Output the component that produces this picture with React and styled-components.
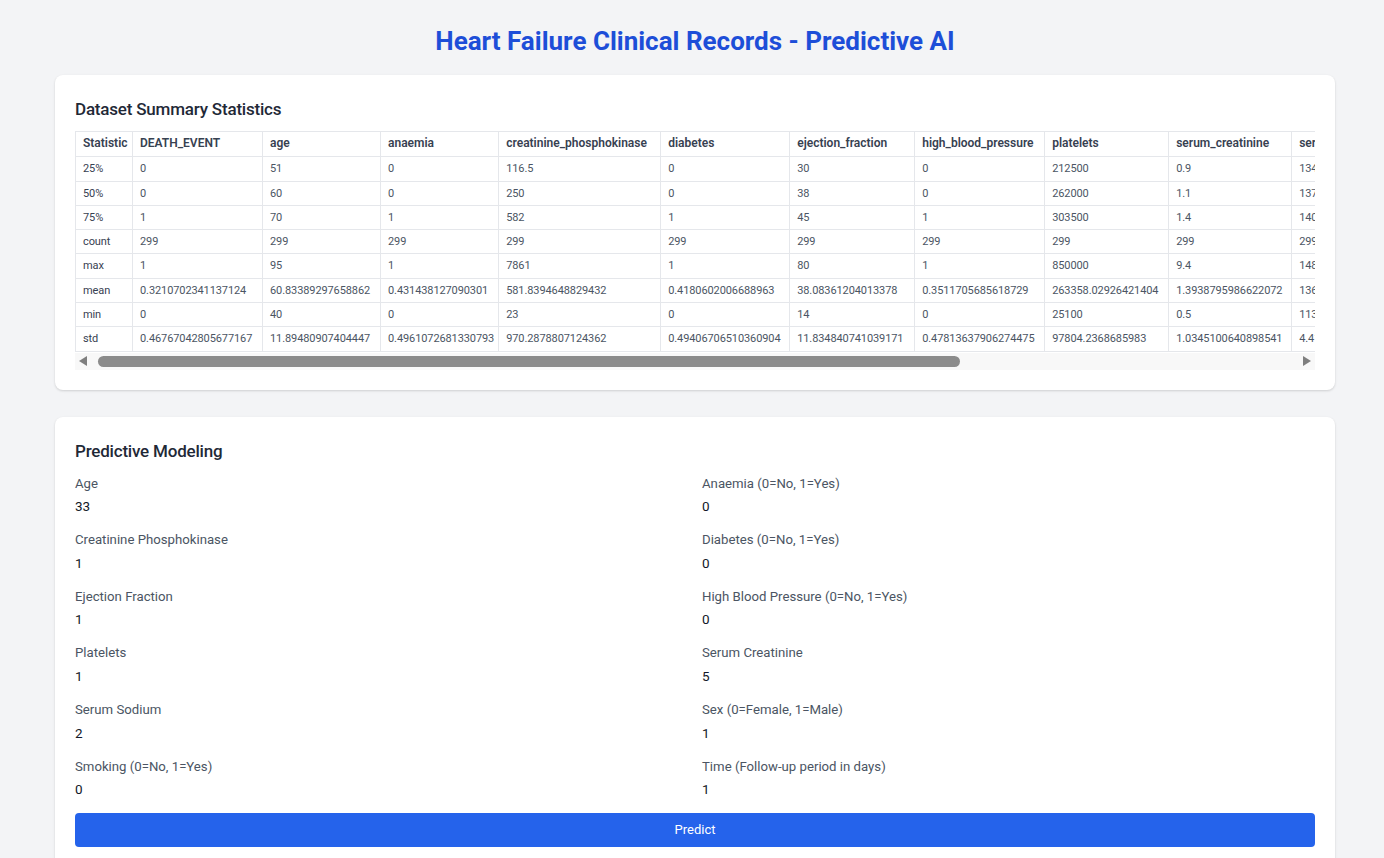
import React from 'react'
import styled, { createGlobalStyle } from 'styled-components'

const GlobalStyle = createGlobalStyle`
  html, body {
    margin: 0;
    padding: 0;
    overflow: hidden;
    background: #f3f4f6;
    font-family: "Segoe UI", Roboto, "Noto Sans", sans-serif;
  }
  * { box-sizing: border-box; }
`

const stats = ['25%', '50%', '75%', 'count', 'max', 'mean', 'min', 'std']

// column widths measured off the original table
const columns = [
  ['DEATH_EVENT', 130, ['0', '0', '1', '299', '1', '0.3210702341137124', '0', '0.46767042805677167']],
  ['age', 118, ['51', '60', '70', '299', '95', '60.83389297658862', '40', '11.89480907404447']],
  ['anaemia', 117, ['0', '0', '1', '299', '1', '0.431438127090301', '0', '0.4961072681330793']],
  ['creatinine_phosphokinase', 162, ['116.5', '250', '582', '299', '7861', '581.8394648829432', '23', '970.2878807124362']],
  ['diabetes', 129, ['0', '0', '1', '299', '1', '0.4180602006688963', '0', '0.49406706510360904']],
  ['ejection_fraction', 125, ['30', '38', '45', '299', '80', '38.08361204013378', '14', '11.834840741039171']],
  ['high_blood_pressure', 130, ['0', '0', '1', '299', '1', '0.3511705685618729', '0', '0.47813637906274475']],
  ['platelets', 124, ['212500', '262000', '303500', '299', '850000', '263358.02926421404', '25100', '97804.2368685983']],
  ['serum_creatinine', 123, ['0.9', '1.1', '1.4', '299', '9.4', '1.3938795986622072', '0.5', '1.0345100640898541']],
  ['serum_sodium', 124, ['134', '137', '140', '299', '148', '136.62541806020067', '113', '4.412477283909235']],
  ['sex', 124, ['0', '1', '1', '299', '1', '0.6488294314381271', '0', '0.47813637906274475']],
  ['smoking', 130, ['0', '0', '1', '299', '1', '0.3210702341137124', '0', '0.46767042805677167']],
  ['time', 118, ['73', '115', '203', '299', '285', '130.2608695652174', '4', '77.61420795029339']],
]

const fields = [
  ['Age', '33'],
  ['Anaemia (0=No, 1=Yes)', '0'],
  ['Creatinine Phosphokinase', '1'],
  ['Diabetes (0=No, 1=Yes)', '0'],
  ['Ejection Fraction', '1'],
  ['High Blood Pressure (0=No, 1=Yes)', '0'],
  ['Platelets', '1'],
  ['Serum Creatinine', '5'],
  ['Serum Sodium', '2'],
  ['Sex (0=Female, 1=Male)', '1'],
  ['Smoking (0=No, 1=Yes)', '0'],
  ['Time (Follow-up period in days)', '1'],
]

function App() {
  return (
    <Page>
      <GlobalStyle />
      <Title>Heart Failure Clinical Records - Predictive AI</Title>

      <Card>
        <CardTitle>Dataset Summary Statistics</CardTitle>
        <TableScroll>
          <Table>
            <thead>
              <tr>
                <Th $w={57}>Statistic</Th>
                {columns.map(([name, w]) => <Th key={name} $w={w}>{name}</Th>)}
              </tr>
            </thead>
            <tbody>
              {stats.map((s, i) => (
                <tr key={s}>
                  <Td $stat>{s}</Td>
                  {columns.map(([name, , vals]) => <Td key={name}>{vals[i]}</Td>)}
                </tr>
              ))}
            </tbody>
          </Table>
        </TableScroll>
        {/* native scrollbars are hidden in the capture, so draw the bar */}
        <ScrollBar>
          <Arrow $dir="left" />
          <Track>
            <Thumb />
          </Track>
          <Arrow $dir="right" />
        </ScrollBar>
      </Card>

      <Card $gap>
        <CardTitle $form>Predictive Modeling</CardTitle>
        <FormGrid>
          {fields.map(([label, value]) => (
            <Field key={label}>
              <Label>{label}</Label>
              <Input defaultValue={value} />
            </Field>
          ))}
        </FormGrid>
        <PredictButton>Predict</PredictButton>
      </Card>
    </Page>
  )
}

export default App

const Page = styled.div`
  width: 1280px;
  margin-left: 55px;
  padding-top: 23px;
`

const Title = styled.h1`
  margin: 0 0 16px;
  text-align: center;
  font-size: 26px;
  line-height: 36px;
  font-weight: 700;
  color: #1d4ed8;
`

const Card = styled.div`
  background: #fff;
  border-radius: 8px;
  box-shadow: 0 1px 3px rgba(0, 0, 0, 0.1), 0 1px 2px rgba(0, 0, 0, 0.06);
  padding: 20px;
  margin-top: ${p => (p.$gap ? '27px' : '0')};
`

const CardTitle = styled.h2`
  margin: 0 0 ${p => (p.$form ? '9px' : '8px')};
  font-size: 17px;
  letter-spacing: -0.2px;
  line-height: 28px;
  font-weight: 500;
  color: #1f2937;
`

const TableScroll = styled.div`
  width: 100%;
  overflow-x: auto;
  scrollbar-width: none;
`

const Table = styled.table`
  border-collapse: collapse;
  font-size: 11px;
  letter-spacing: -0.1px;
  line-height: 15.3px;
  white-space: nowrap;
`

const Th = styled.th`
  width: ${p => p.$w}px;
  min-width: ${p => p.$w}px;
  border: 1px solid #e5e7eb;
  padding: 4px 4px 5px 7px;
  text-align: left;
  font-size: 12px;
  letter-spacing: 0;
  font-weight: 600;
  color: #374151;
`

const Td = styled.td`
  border: 1px solid #e5e7eb;
  padding: 4px 4px 4px 7px;
  color: ${p => (p.$stat ? '#374151' : '#4b5563')};
`

const ScrollBar = styled.div`
  display: flex;
  align-items: center;
  height: 17px;
  margin-top: 1px;
  background: #f8f8f8;
`

const Arrow = styled.div`
  width: 17px;
  height: 17px;
  display: flex;
  align-items: center;
  justify-content: center;

  &::before {
    content: "";
    width: 0;
    height: 0;
    border-top: 5px solid transparent;
    border-bottom: 5px solid transparent;
    ${p => (p.$dir === 'left'
      ? 'border-right: 8px solid #7f7f7f; margin-left: -1px;'
      : 'border-left: 8px solid #7f7f7f; margin-right: -1px;')}
  }
`

const Track = styled.div`
  flex: 1;
  height: 100%;
  display: flex;
  align-items: center;
`

const Thumb = styled.div`
  margin-left: 6px;
  width: 862px;
  height: 11px;
  border-radius: 6px;
  background: #8b8b8b;
`

const FormGrid = styled.div`
  display: grid;
  grid-template-columns: 1fr 1fr;
  column-gap: 14px;
  row-gap: 13.6px;
`

const Field = styled.div`
  display: flex;
  flex-direction: column;
`

const Label = styled.label`
  font-size: 13.2px;
  line-height: 20px;
  color: #4b5563;
`

const Input = styled.input`
  margin-top: 2px;
  height: 21px;
  border: none;
  outline: none;
  padding: 0;
  font-family: inherit;
  font-size: 13.5px;
  color: #111827;
  background: transparent;
`

const PredictButton = styled.button`
  display: block;
  width: 100%;
  margin-top: 13px;
  height: 34px;
  border: none;
  border-radius: 4px;
  background: #2563eb;
  color: #fff;
  font-family: inherit;
  font-size: 13px;
  cursor: pointer;
`
